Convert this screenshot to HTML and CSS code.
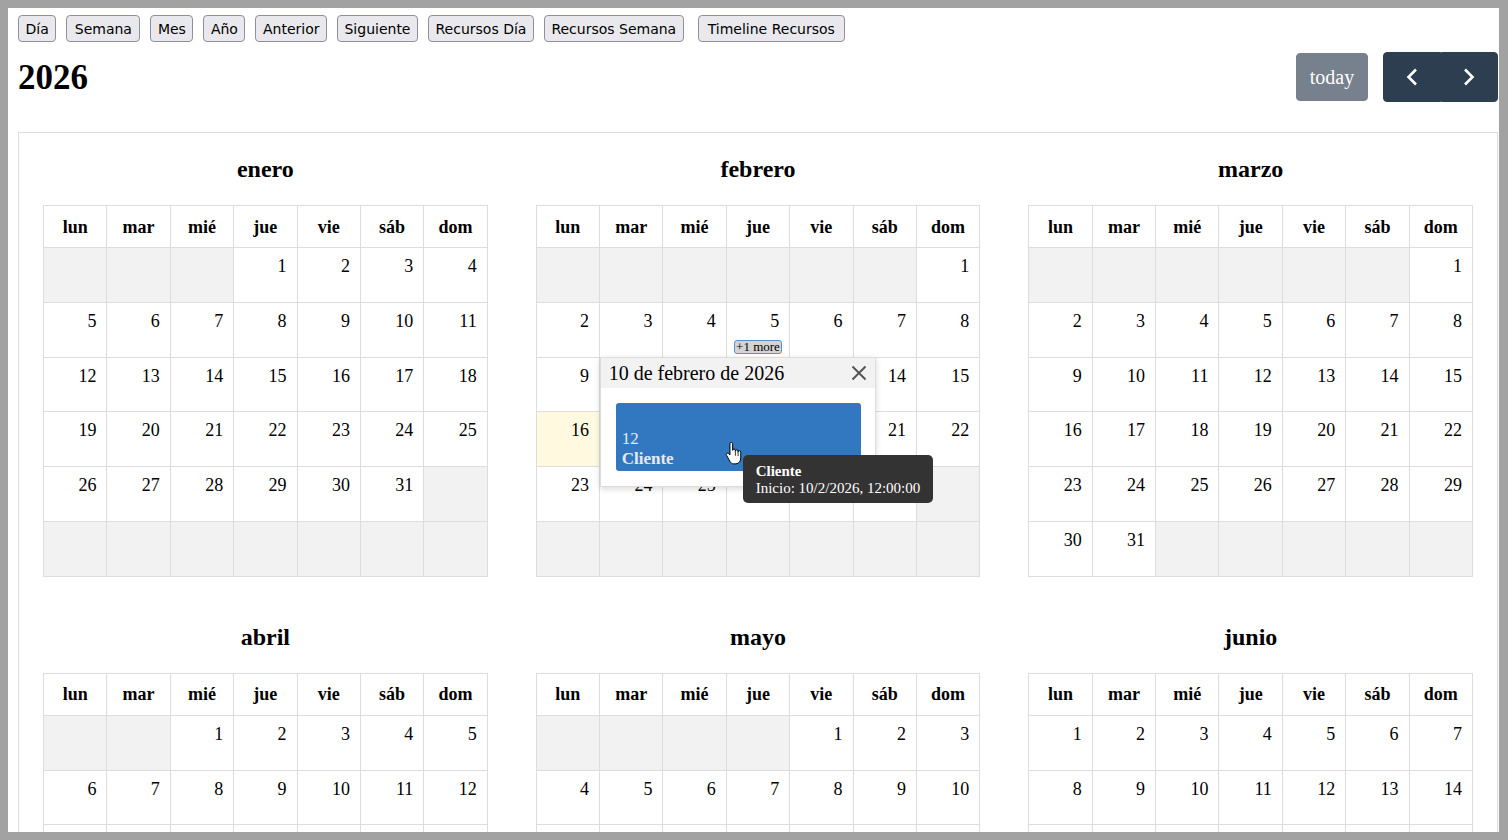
FILE: index.html
```html
<!DOCTYPE html>
<html lang="es">
<head>
  <meta charset="UTF-8">
  <title>Calendario 2026</title>
  <link rel="stylesheet" href="styles.css">
</head>
<body>
  <div class="page">
    <div class="toolbar">
      <button>Día</button>
      <button class="wide">Semana</button>
      <button>Mes</button>
      <button>Año</button>
      <button>Anterior</button>
      <button>Siguiente</button>
      <button>Recursos Día</button>
      <button>Recursos Semana</button>
      <button class="last">Timeline Recursos</button>
    </div>

    <div class="header">
      <h2 class="title">2026</h2>
      <div class="actions">
        <button class="btn-today">today</button>
        <div class="btn-group">
          <button class="btn-nav"><svg width="12" height="18" viewBox="0 0 12 18"><polyline points="10,1.5 2.5,9 10,16.5" fill="none" stroke="#fff" stroke-width="2.6"/></svg></button>
          <button class="btn-nav"><svg width="12" height="18" viewBox="0 0 12 18"><polyline points="2,1.5 9.5,9 2,16.5" fill="none" stroke="#fff" stroke-width="2.6"/></svg></button>
        </div>
      </div>
    </div>

    <div class="calendar">
      <div class="month">
        <div class="month-title">enero</div>
        <div class="month-grid" data-month="0"><table></table></div>
      </div>
      <div class="month">
        <div class="month-title">febrero</div>
        <div class="month-grid" data-month="1">
          <table></table>
          <div class="popover">
            <div class="popover-header">
              <span>10 de febrero de 2026</span>
              <svg class="close" width="16" height="16" viewBox="0 0 16 16"><path d="M1.5 1.5L14.5 14.5M14.5 1.5L1.5 14.5" stroke="#555" stroke-width="2" fill="none"/></svg>
            </div>
            <div class="popover-body">
              <div class="event">
                <div class="event-time">12</div>
                <div class="event-title">Cliente</div>
              </div>
            </div>
          </div>
          <svg class="cursor" width="18" height="25" viewBox="0 0 20 27">
            <path d="M5.5 2.6a1.5 1.5 0 0 1 3 0V10a1.5 1.5 0 0 1 3 0v1a1.5 1.5 0 0 1 3 0v1a1.5 1.5 0 0 1 3 0v6.5c0 3.5-2 6.5-5.5 6.5H9.5c-2 0-3.2-1.2-4.2-3L1.8 15.6a1.5 1.5 0 0 1 2.3-2L5.5 15.2Z" fill="#fff" stroke="#000" stroke-width="1.1" stroke-linejoin="round"/>
            <path d="M11.5 11v5M14.5 12v4.5" stroke="#000" stroke-width="0.9"/>
          </svg>
          <div class="tooltip">
            <div class="tooltip-title">Cliente</div>
            <div>Inicio: 10/2/2026, 12:00:00</div>
          </div>
        </div>
      </div>
      <div class="month">
        <div class="month-title">marzo</div>
        <div class="month-grid" data-month="2"><table></table></div>
      </div>
      <div class="month">
        <div class="month-title">abril</div>
        <div class="month-grid" data-month="3"><table></table></div>
      </div>
      <div class="month">
        <div class="month-title">mayo</div>
        <div class="month-grid" data-month="4"><table></table></div>
      </div>
      <div class="month">
        <div class="month-title">junio</div>
        <div class="month-grid" data-month="5"><table></table></div>
      </div>
    </div>
  </div>

  <script>
    var dayNames = ["lun", "mar", "mié", "jue", "vie", "sáb", "dom"];
    var grids = document.querySelectorAll(".month-grid");

    grids.forEach(function(grid) {
      var m = parseInt(grid.getAttribute("data-month"), 10);
      var offset = (new Date(2026, m, 1).getDay() + 6) % 7;
      var days = new Date(2026, m + 1, 0).getDate();
      var html = "<thead><tr>";
      dayNames.forEach(function(d) {
        html += "<th>" + d + "</th>";
      });
      html += "</tr></thead><tbody>";
      for (var r = 0; r < 6; r++) {
        html += "<tr>";
        for (var c = 0; c < 7; c++) {
          var day = r * 7 + c - offset + 1;
          if (day < 1 || day > days) {
            html += '<td class="off"></td>';
            continue;
          }
          var cls = (m === 1 && day === 16) ? ' class="today"' : "";
          html += "<td" + cls + '><div class="num">' + day + "</div>";
          // el enlace "+1 more" del jueves 5
          if (m === 1 && day === 5) html += '<div class="more"><span>+1 more</span></div>';
          html += "</td>";
        }
        html += "</tr>";
      }
      html += "</tbody>";
      grid.querySelector("table").innerHTML = html;
    });
  </script>
</body>
</html>
```

FILE: styles.css
```css
* {box-sizing: border-box;}
body {margin: 0; padding: 8px 9px 8px 8px; height: 840px; overflow: hidden; background: #a2a2a2; font-family: "Liberation Serif", "Times New Roman", serif; font-size: 20px; color: #000;}
.page {background: #fff; height: 824px; overflow: hidden; padding: 7px 1px 0 10px;}

.toolbar {display: flex; gap: 10px;}
.toolbar button {height: 27px; padding: 0 6.5px; font-family: "DejaVu Sans", Tahoma, sans-serif; font-size: 14px; color: #000; background: #e9e9ed; border: 1px solid #8f8f9d; border-radius: 4px;}
.toolbar button.wide {padding: 0 7.5px;}
.toolbar button.last {margin-left: 4px; padding: 0 9px;}

.header {display: flex; justify-content: space-between; align-items: center; height: 50px; margin-top: 10px;}
.title {margin: 0; font-size: 35px; font-weight: bold; line-height: 1;}
.actions {display: flex; align-items: center; gap: 15px;}
.btn-today {width: 72px; height: 48px; padding: 0; background: #76818d; color: #fff; border: 1px solid #76818d; border-radius: 4px; font-family: "Liberation Serif", serif; font-size: 20px;}
.btn-group {display: flex;}
.btn-nav {width: 57.5px; height: 50px; padding: 0; background: #2c3e50; border: 1px solid #2c3e50; display: flex; align-items: center; justify-content: center;}
.btn-nav:first-child {border-radius: 4px 0 0 4px;}
.btn-nav:last-child {border-radius: 0 4px 4px 0;}

.calendar {margin-top: 30px; border: 1px solid #ddd; display: grid; grid-template-columns: repeat(3, 1fr);}
.month {padding: 23px 24px 24px;}
.month-title {text-align: center; font-size: 24px; font-weight: bold; line-height: 26px; margin-bottom: 23px;}
.month-grid {position: relative;}
.month-grid table {width: 100%; table-layout: fixed; border-collapse: collapse; font-size: 18px;}
.month-grid th {height: 42px; border: 1px solid #ddd; font-weight: bold; text-align: center; vertical-align: middle; padding: 1px 0 0;}
.month-grid td {height: 54.8px; border: 1px solid #ddd; vertical-align: top; padding: 0;}
.month-grid td.off {background: #f2f2f2;}
.month-grid td.today {background: #fffadf;}
.num {text-align: right; line-height: 21px; padding: 8px 10px 0 0;}
.more {text-align: center; margin-top: 7px; line-height: 12px;}
.more span {display: inline-block; font-size: 13px; line-height: 12px; padding: 0 1px; background: #d4d4d4; border: 1px solid #5b8fd0; border-radius: 3px;}

.popover {position: absolute; left: 64px; top: 152px; width: 276px; height: 130px; background: #fff; border: 1px solid #ddd; box-shadow: 0 2px 6px rgba(0,0,0,0.15); z-index: 5;}
.popover-header {height: 30px; display: flex; align-items: center; justify-content: space-between; padding: 0 8px; background: #f2f2f2; font-size: 20px;}
.popover-body {padding: 15px 14px 15px 15px;}
.event {height: 68px; background: #3178c0; border-radius: 3px; color: #e8e8ee; font-size: 17px; line-height: 20px; display: flex; flex-direction: column; justify-content: flex-end; padding: 0 6px 2px;}
.event-title {font-weight: bold;}

.cursor {position: absolute; left: 189px; top: 236px; z-index: 7;}
.tooltip {position: absolute; left: 207px; top: 250px; background: #333; color: #fff; font-size: 15px; line-height: 17px; padding: 8px 13px 6px; border-radius: 5px; white-space: nowrap; z-index: 6;}
.tooltip-title {font-weight: bold;}
```
